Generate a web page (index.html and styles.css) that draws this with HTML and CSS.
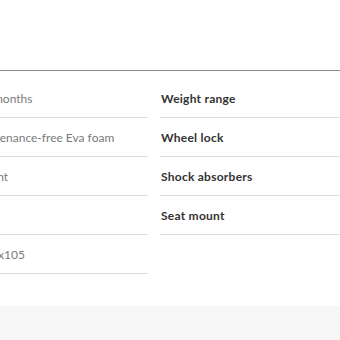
FILE: index.html
```html
<!DOCTYPE html>
<html lang="en">
<head>
  <meta charset="UTF-8">
  <title>Specifications</title>
  <link rel="stylesheet" href="styles.css">
</head>
<body>
  <div class="page">
    <section class="specs">
      <div class="spec-col spec-col-left">
        <div class="spec-row"><span class="spec-label">Warranty</span><span class="spec-value">24+ months</span></div>
        <div class="spec-row"><span class="spec-label">Wheels</span><span class="spec-value">Maintenance-free Eva foam</span></div>
        <div class="spec-row"><span class="spec-label">Design</span><span class="spec-value">Elegant</span></div>
        <div class="spec-row"><span class="spec-label">Recline</span><span class="spec-value"></span></div>
        <div class="spec-row"><span class="spec-label">Dimensions</span><span class="spec-value">H. 45x105</span></div>
      </div>
      <div class="spec-col spec-col-right">
        <div class="spec-row"><span class="spec-label">Weight range</span></div>
        <div class="spec-row"><span class="spec-label">Wheel lock</span></div>
        <div class="spec-row"><span class="spec-label">Shock absorbers</span></div>
        <div class="spec-row"><span class="spec-label">Seat mount</span></div>
      </div>
    </section>
    <div class="footer-band"></div>
  </div>
</body>
</html>
```

FILE: styles.css
```css
html, body {
  margin: 0;
  padding: 0;
  overflow: hidden;
  background: #fff;
}

body {
  font-family: Lato, "Open Sans", sans-serif;
  font-size: 12px;
  width: 340px;
  height: 340px;
}

.page {
  padding-top: 70px;
}

/* the table is wider than the frame, its left column is scrolled off */
.specs {
  border-top: 1px solid #8c8c8c;
  padding-top: 8px;
  margin-left: -130px;
  width: 620px;
  display: grid;
  grid-template-columns: 278px 300px;
  column-gap: 12px;
  align-items: start;
}

.spec-row {
  height: 38px;
  border-bottom: 1px solid #dcdcdc;
  display: flex;
  align-items: center;
}

.spec-col-left .spec-label {
  width: 99px;
  flex-shrink: 0;
  font-weight: bold;
  color: #333;
}

.spec-col-right .spec-label {
  padding-left: 1px;
  font-weight: bold;
  letter-spacing: 0.25px;
  color: #333;
}

.spec-value {
  color: #7a7a7a;
  white-space: nowrap;
}

.footer-band {
  margin-top: 32px;
  height: 40px;
  background: #f7f7f7;
}
```
